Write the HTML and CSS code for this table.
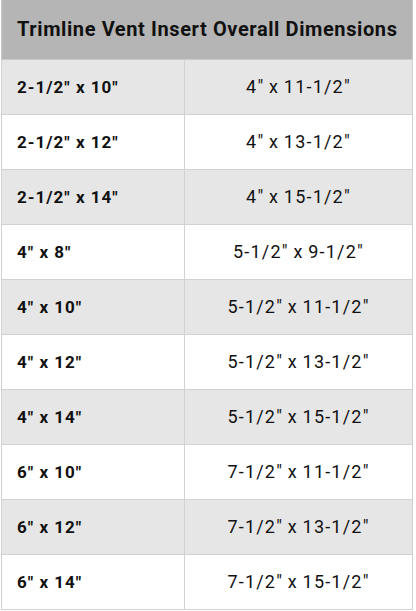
FILE: index.html
```html
<!DOCTYPE html>
<html>
<head>
<meta charset="utf-8">
<link rel="stylesheet" href="styles.css">
</head>
<body>
<table class="dims">
  <colgroup>
    <col class="col-size">
    <col class="col-overall">
  </colgroup>
  <thead>
    <tr><th colspan="2" class="title">Trimline Vent Insert Overall Dimensions</th></tr>
  </thead>
  <tbody>
    <tr class="alt"><td class="size">2-1/2" x 10"</td><td class="overall">4" x 11-1/2"</td></tr>
    <tr><td class="size">2-1/2" x 12"</td><td class="overall">4" x 13-1/2"</td></tr>
    <tr class="alt"><td class="size">2-1/2" x 14"</td><td class="overall">4" x 15-1/2"</td></tr>
    <tr><td class="size">4" x 8"</td><td class="overall">5-1/2" x 9-1/2"</td></tr>
    <tr class="alt"><td class="size">4" x 10"</td><td class="overall">5-1/2" x 11-1/2"</td></tr>
    <tr><td class="size">4" x 12"</td><td class="overall">5-1/2" x 13-1/2"</td></tr>
    <tr class="alt"><td class="size">4" x 14"</td><td class="overall">5-1/2" x 15-1/2"</td></tr>
    <tr><td class="size">6" x 10"</td><td class="overall">7-1/2" x 11-1/2"</td></tr>
    <tr class="alt"><td class="size">6" x 12"</td><td class="overall">7-1/2" x 13-1/2"</td></tr>
    <tr><td class="size">6" x 14"</td><td class="overall">7-1/2" x 15-1/2"</td></tr>
  </tbody>
</table>
</body>
</html>
```
FILE: styles.css
```css
html, body {
  margin: 0;
  padding: 0;
  background: #ffffff;
}
body {
  padding-left: 1px;
  font-family: Roboto, "Liberation Sans", sans-serif;
  color: #111111;
}
.dims {
  border-collapse: collapse;
  width: 411px;
  table-layout: fixed;
}
.col-size {
  width: 183px;
}
.col-overall {
  width: 228px;
}
.title {
  background: #b5b5b5;
  height: 59px;
  box-sizing: border-box;
  font-size: 20px;
  font-weight: 700;
  text-align: left;
  padding: 0 0 0 15px;
  border: 1px solid #c8c8c8;
  border-top: none;
  letter-spacing: 0.6px;
  white-space: nowrap;
}
.dims td {
  height: 55px;
  box-sizing: border-box;
  border: 1px solid #d2d2d2;
  font-size: 17px;
  padding: 0;
}
.dims tr.alt td {
  background: #e6e6e6;
}
.dims td.size {
  font-weight: 700;
  padding-left: 15px;
  letter-spacing: 1px;
}
.dims td.overall {
  text-align: center;
  font-weight: 400;
  font-size: 18px;
  letter-spacing: 1.2px;
  word-spacing: -1px;
}
```
